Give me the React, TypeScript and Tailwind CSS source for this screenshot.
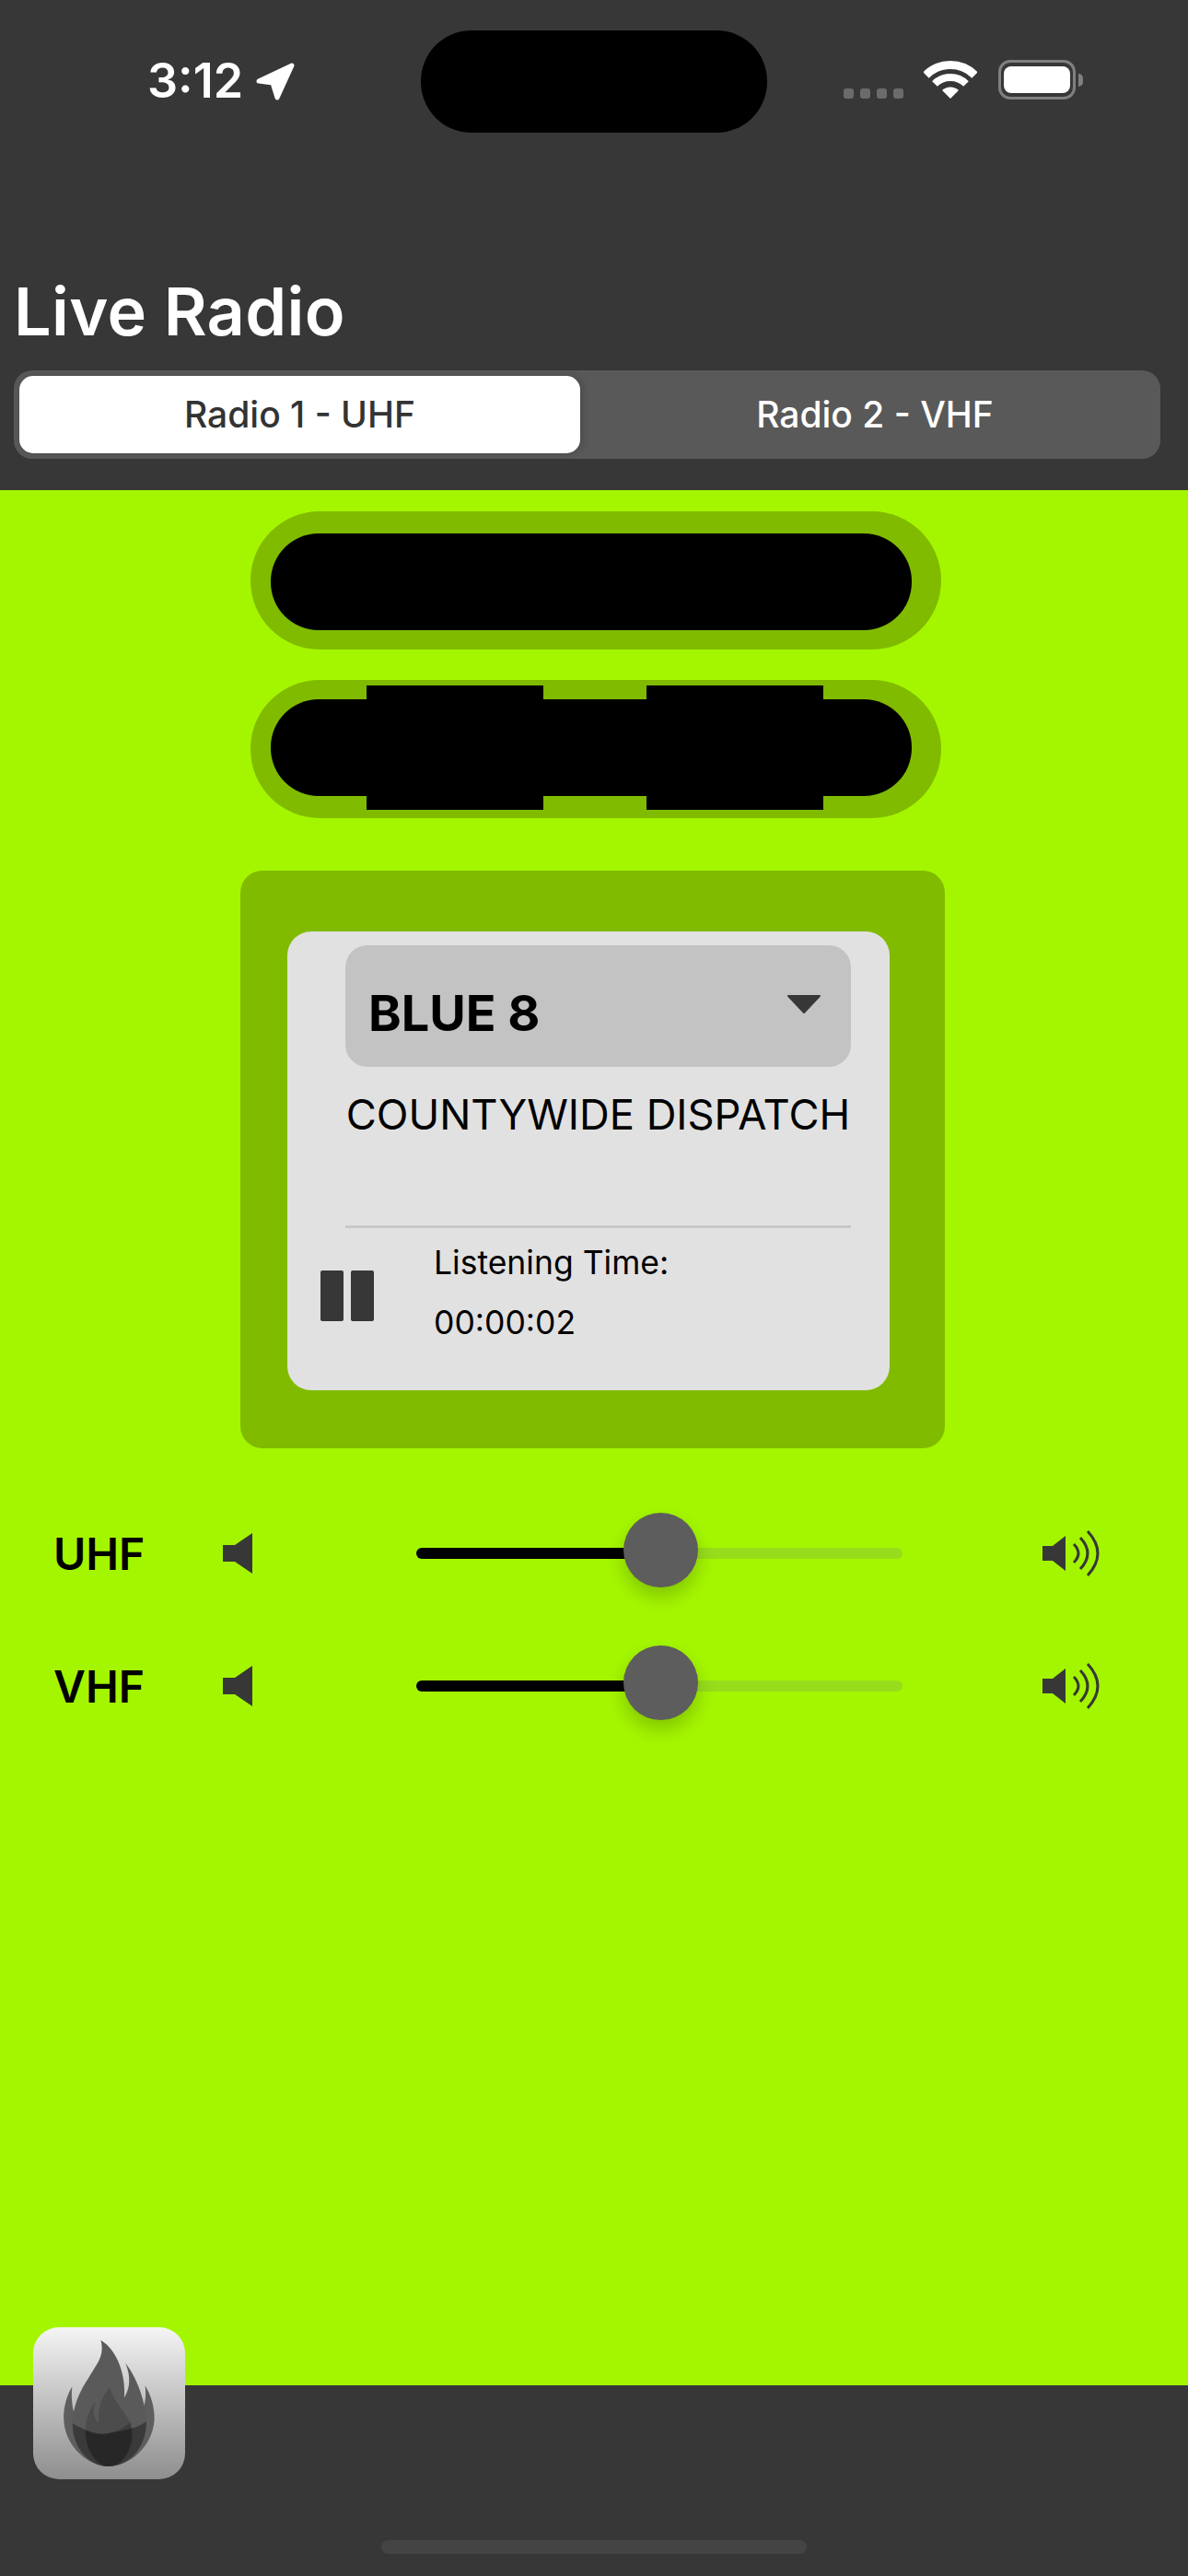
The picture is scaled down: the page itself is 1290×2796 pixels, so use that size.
const font = { fontFamily: 'Inter, "Liberation Sans", sans-serif' };

function LocationArrow() {
  return (
    <svg width="46" height="46" viewBox="0 0 46 46" className="mt-[4px]">
      <path d="M5 22 L41 5 L25 40 L20 24 Z" fill="#fff" stroke="#fff" strokeWidth="5" strokeLinejoin="round" />
    </svg>
  );
}

function StatusBar() {
  return (
    <div className="flex h-[144px] items-start">
      <div className="ml-[160px] mt-[62px] flex w-[162px] items-start">
        <span className="w-[116px] text-[52px] leading-[52px] font-semibold text-white">3:12</span>
        <LocationArrow />
      </div>
      <div className="ml-[135px] mt-[33px] h-[111px] w-[376px] rounded-[55px] bg-black" />
      <div className="ml-[83px] mt-[96px] flex gap-[7px]">
        {[0, 1, 2, 3].map((i) => (
          <div key={i} className="h-[11px] w-[11px] rounded-[3px] bg-[#6b6b6b]" />
        ))}
      </div>
      <svg width="58" height="44" viewBox="0 0 58 44" className="ml-[22px] mt-[65px]">
        <path d="M2.5 16.5 A37.5 37.5 0 0 1 55.5 16.5" fill="none" stroke="#fff" strokeWidth="9" />
        <path d="M12 26 A24 24 0 0 1 46 26" fill="none" stroke="#fff" strokeWidth="8" />
        <path d="M29 42 L20 33 A13 13 0 0 1 38 33 Z" fill="#fff" />
      </svg>
      <div className="ml-[23px] mt-[65px] flex items-center">
        <div className="flex h-[43px] w-[84px] items-center justify-center rounded-[13px] border-[3px] border-[#808080]">
          <div className="h-[29px] w-[72px] rounded-[8px] bg-white" />
        </div>
        <div className="ml-[3px] h-[14px] w-[5px] rounded-r-full bg-[#808080]" />
      </div>
    </div>
  );
}

function Tabs() {
  return (
    <div className="mx-[15px] mt-[-1px] flex h-[96px] w-[1245px] items-center rounded-[20px] bg-[#595959] pl-[6px]">
      <div className="flex h-[84px] w-[609px] items-center justify-center rounded-[15px] bg-white text-[39px] font-medium text-[#333333] shadow-[2px_0_8px_rgba(0,0,0,0.2)]">
        Radio 1 - UHF
      </div>
      <div className="flex h-[84px] flex-1 items-center justify-center pl-[10px] text-[39px] font-medium text-white">
        Radio 2 - VHF
      </div>
    </div>
  );
}

function Pill({ blocks }: { blocks?: boolean }) {
  return (
    <div className="relative ml-[272px] flex h-[150px] w-[750px] items-start rounded-[75px] bg-[#80bb00] pl-[22px] pr-[32px]">
      <div className={blocks ? 'mt-[21px] h-[105px] w-full rounded-[52px] bg-black' : 'mt-[24px] h-[105px] w-full rounded-[52px] bg-black'} />
      {blocks && (
        <>
          <div className="absolute left-[126px] top-[6px] h-[135px] w-[192px] bg-black" />
          <div className="absolute left-[430px] top-[6px] h-[135px] w-[192px] bg-black" />
        </>
      )}
    </div>
  );
}

function PlayerCard() {
  return (
    <div className="ml-[261px] mt-[57px] h-[627px] w-[765px] rounded-[24px] bg-[#80bb00] pl-[51px] pt-[66px]">
      <div className="h-[498px] w-[654px] rounded-[26px] bg-[#e1e1e1] pt-[15px]">
        <div className="ml-[63px] flex h-[132px] w-[549px] items-start justify-between rounded-[24px] bg-[#c3c3c3] pl-[25px] pr-[32px]">
          <span className="mt-[41px] text-[54px] leading-[66px] font-bold text-black">BLUE 8</span>
          <svg width="38" height="22" viewBox="0 0 38 22" className="mt-[53px]">
            <path d="M2 2 H36 L19 20 Z" fill="#373737" stroke="#373737" strokeWidth="2" strokeLinejoin="round" />
          </svg>
        </div>
        <div className="ml-[63px] mt-[24px] w-[549px] text-center text-[45.3px] leading-[56px] whitespace-nowrap text-black">
          COUNTYWIDE DISPATCH
        </div>
        <div className="ml-[63px] mt-[92px] h-[3px] w-[549px] bg-[#c8c8c8]" />
        <div className="flex items-start">
          <div className="ml-[36px] mt-[46px] flex gap-[8px]">
            <div className="h-[55px] w-[25px] rounded-[2px] bg-[#373737]" />
            <div className="h-[55px] w-[25px] rounded-[2px] bg-[#373737]" />
          </div>
          <div className="ml-[65px] mt-[16px] text-[35.5px] leading-[44px] text-black">
            <div>Listening Time:</div>
            <div className="mt-[21px]">00:00:02</div>
          </div>
        </div>
      </div>
    </div>
  );
}

function SpeakerLow() {
  return (
    <svg width="32" height="44" viewBox="0 0 32 44">
      <path d="M0 13 H13 L32 0 V44 L13 31 H0 Z" fill="#373737" />
    </svg>
  );
}

function SpeakerHigh() {
  return (
    <svg width="62" height="50" viewBox="0 0 62 50">
      <path d="M0 17 H11 L25 6 V44 L11 33 H0 Z" fill="#373737" />
      <g fill="none" stroke="#373737" strokeWidth="3">
        <path d="M34 15 Q44 25 34 35" />
        <path d="M41 8 Q57 25 41 42" />
        <path d="M49 1 Q71 25 49 49" />
      </g>
    </svg>
  );
}

function VolumeRow({ label }: { label: string }) {
  return (
    <div className="flex h-[81px] items-center">
      <div className="ml-[58px] mt-[6px] w-[96px] text-[48px] leading-[56px] font-semibold whitespace-nowrap text-black">{label}</div>
      <div className="ml-[88px] mt-[5px] flex">
        <SpeakerLow />
      </div>
      <div className="relative ml-[178px] mt-[5px] flex h-[12px] w-[528px]">
        <div className="h-full w-[245px] rounded-l-full bg-black" />
        <div className="h-full flex-1 rounded-r-[6px] bg-[#98dd1c]" />
        <div className="absolute left-[225px] top-[-38px] h-[81px] w-[81px] rounded-full bg-[#5d5d5d] shadow-[0_10px_20px_rgba(0,0,0,0.2)]" />
      </div>
      <div className="ml-[152px] mt-[5px] flex">
        <SpeakerHigh />
      </div>
    </div>
  );
}

function AppIcon() {
  return (
    <div className="absolute left-[36px] top-[2526px] h-[165px] w-[165px] overflow-hidden rounded-[28px] bg-linear-to-b from-[#f5f5f5] to-[#8e8e8e]">
      <svg width="165" height="165" viewBox="108 138 494 494">
        <path
          d="M235 330 C210 370 205 420 208 445 C215 530 290 590 352 590 C420 590 495 530 502 440 C504 400 490 355 472 328 C476 360 472 385 466 400 C460 440 400 485 350 485 C300 485 240 440 236 395 C233 370 232 350 235 330 Z"
          fill="#5e5e5e"
        />
        <path
          d="M328 180 C340 230 320 250 290 300 C260 345 236 395 236 455 C236 530 290 590 352 590 C420 590 476 530 476 450 C476 385 445 300 408 255 C425 295 425 335 404 367 C410 300 385 215 328 180 Z"
          fill="#5a5a5a"
        />
        <path
          d="M358 332 C362 375 420 420 430 470 C440 530 400 590 352 590 C310 590 278 530 278 480 C278 440 290 405 312 380 C300 410 305 435 322 450 C315 410 330 365 358 332 Z"
          fill="#4c4c4c"
        />
        <path
          d="M236 450 C270 470 320 490 352 483 C390 475 440 470 476 445 C476 530 420 590 352 590 C290 590 236 530 236 450 Z"
          fill="#000"
          fillOpacity="0.35"
        />
        <path
          d="M278 475 C300 485 325 490 352 483 C380 476 405 465 425 445 C440 530 400 590 352 590 C310 590 278 530 278 475 Z"
          fill="#000"
          fillOpacity="0.2"
        />
      </svg>
    </div>
  );
}

export default function App() {
  return (
    <div className="relative flex h-[2796px] w-[1290px] flex-col overflow-hidden bg-[#373737]" style={font}>
      <div className="h-[532px] shrink-0">
        <StatusBar />
        <div className="ml-[15px] mt-[150px] h-[109px] text-[72px] leading-[88px] font-semibold tracking-[0.3px] text-white">
          Live Radio
        </div>
        <Tabs />
      </div>

      <div className="h-[2057px] shrink-0 bg-[#a4f600] pt-[23px]">
        <Pill />
        <div className="mt-[33px]">
          <Pill blocks />
        </div>
        <PlayerCard />
        <div className="mt-[71px] flex flex-col gap-[63px]">
          <VolumeRow label="UHF" />
          <VolumeRow label="VHF" />
        </div>
      </div>

      <div className="flex flex-1 items-end justify-center pb-[24px]">
        <div className="h-[15px] w-[462px] rounded-full bg-[#444444]" />
      </div>

      <AppIcon />
    </div>
  );
}
